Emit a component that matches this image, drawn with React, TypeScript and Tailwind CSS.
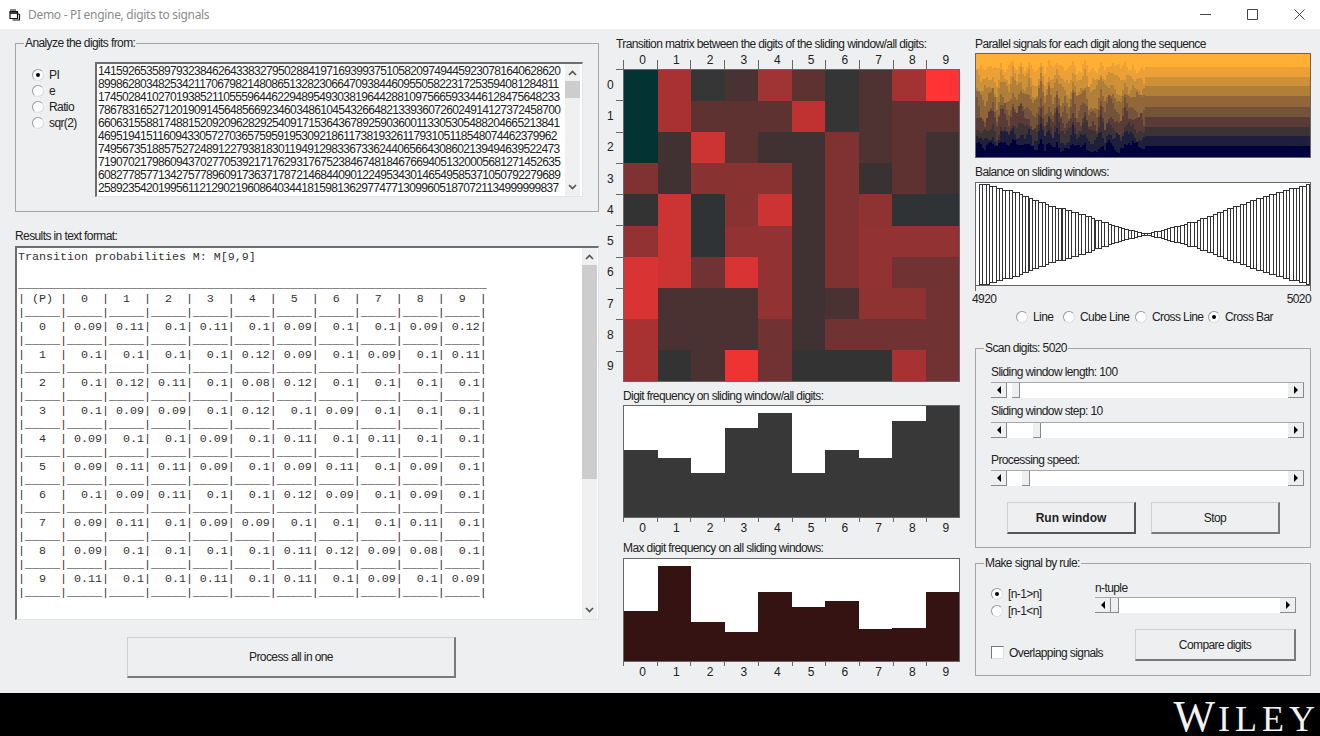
import React from 'react';

const UI = "font-['Liberation_Sans',Arial,sans-serif] text-[12px] leading-[12px] tracking-[-0.6px] text-[#222]";

const piLines = [
    '14159265358979323846264338327950288419716939937510582097494459230781640628620',
    '89986280348253421170679821480865132823066470938446095505822317253594081284811',
    '17450284102701938521105559644622948954930381964428810975665933446128475648233',
    '78678316527120190914564856692346034861045432664821339360726024914127372458700',
    '66063155881748815209209628292540917153643678925903600113305305488204665213841',
    '46951941511609433057270365759591953092186117381932611793105118548074462379962',
    '74956735188575272489122793818301194912983367336244065664308602139494639522473',
    '71907021798609437027705392171762931767523846748184676694051320005681271452635',
    '60827785771342757789609173637178721468440901224953430146549585371050792279689',
    '25892354201995611212902196086403441815981362977477130996051870721134999999837',
];

const probs = [
    ['0.09', '0.11', '0.1', '0.11', '0.1', '0.09', '0.1', '0.1', '0.09', '0.12'],
    ['0.1', '0.1', '0.1', '0.1', '0.12', '0.09', '0.1', '0.09', '0.1', '0.11'],
    ['0.1', '0.12', '0.11', '0.1', '0.08', '0.12', '0.1', '0.1', '0.1', '0.1'],
    ['0.1', '0.09', '0.09', '0.1', '0.12', '0.1', '0.09', '0.1', '0.1', '0.1'],
    ['0.09', '0.1', '0.1', '0.09', '0.1', '0.11', '0.1', '0.11', '0.1', '0.1'],
    ['0.09', '0.11', '0.11', '0.09', '0.1', '0.09', '0.11', '0.1', '0.09', '0.1'],
    ['0.1', '0.09', '0.11', '0.1', '0.1', '0.12', '0.09', '0.1', '0.09', '0.1'],
    ['0.09', '0.11', '0.1', '0.09', '0.09', '0.1', '0.1', '0.1', '0.11', '0.1'],
    ['0.09', '0.1', '0.1', '0.1', '0.1', '0.11', '0.12', '0.09', '0.08', '0.1'],
    ['0.11', '0.1', '0.1', '0.11', '0.1', '0.11', '0.1', '0.09', '0.1', '0.09'],
];

const underRow = '|' + '_____|'.repeat(11);
const resultText = [
    'Transition probabilities M: M[9,9]',
    '',
    '_'.repeat(67),
    '| (P) |' + Array.from({ length: 10 }, (_, i) => `  ${i}  |`).join(''),
    underRow,
    ...probs.flatMap((row, i) => [
        `|  ${i}  |` + row.map((v) => v.padStart(5, ' ') + '|').join(''),
        underRow,
    ]),
].join('\n');

const matrix = [
    ['#033333', '#a83232', '#363636', '#4a3232', '#a03333', '#5f3232', '#353535', '#4f3232', '#a33232', '#ff3333'],
    ['#033333', '#a83232', '#5f3232', '#5f3232', '#5f3232', '#c03232', '#353535', '#4f3232', '#5f3232', '#5f3232'],
    ['#033333', '#403232', '#cc3333', '#5f3232', '#403232', '#403232', '#803232', '#4f3232', '#5f3232', '#403232'],
    ['#803232', '#403232', '#883232', '#883232', '#883232', '#403232', '#803232', '#3a3232', '#5f3232', '#403232'],
    ['#333333', '#cc3333', '#303336', '#883232', '#cc3333', '#403232', '#803232', '#8f3232', '#303336', '#303336'],
    ['#933232', '#cc3333', '#303336', '#933232', '#933232', '#403232', '#803232', '#933232', '#933232', '#933232'],
    ['#d93333', '#cc3333', '#703232', '#d93333', '#933232', '#403232', '#803232', '#933232', '#703232', '#703232'],
    ['#d93333', '#4a3232', '#4a3232', '#4a3232', '#933232', '#403232', '#4a3232', '#8f3232', '#8f3232', '#703232'],
    ['#a83232', '#4a3232', '#4a3232', '#4a3232', '#703232', '#403232', '#703232', '#703232', '#703232', '#703232'],
    ['#a83232', '#333333', '#4a3232', '#ef3333', '#703232', '#333333', '#333333', '#333333', '#a83232', '#703232'],
];

const freqHeights = [67, 59, 44, 89, 104, 44, 67, 59, 96, 111];
const maxHeights = [50, 95, 39, 29, 69, 54, 60, 32, 33, 69];

const bandColors = ['#ffaf33', '#eda035', '#cf9138', '#b07f39', '#91673a', '#735339', '#5a3b38', '#3c3337', '#1e1f3c', '#00003c'];
const bandTops = [0, 13, 23, 33, 43, 54, 64, 74, 84, 94];

function makeNoise(seed: number) {
    let s = seed;
    return () => {
        s = (s * 1664525 + 1013904223) % 4294967296;
        return s / 4294967296;
    };
}

function bandPaths() {
    const rand = makeNoise(31415);
    const sharedKnots = Array.from({ length: 60 }, () => rand() * 2 - 1);
    return bandTops.map((top, k) => {
        if (k === 0) return 'M0 0H335V105H0Z';
        const ownKnots = Array.from({ length: 60 }, () => rand() * 2 - 1);
        const amp = 5 + 9 * Math.sin((k / 10) * Math.PI);
        let d = `M0 ${top}`;
        for (let x = 0; x < 170; x += 2) {
            const t = x / 4;
            const i = Math.floor(t);
            const f = t - i;
            const shared = sharedKnots[i] * (1 - f) + sharedKnots[i + 1] * f;
            const own = ownKnots[i] * (1 - f) + ownKnots[i + 1] * f;
            const y = Math.round(top + (shared * 0.7 + own * 0.55) * amp + (rand() - 0.5) * 4 - 1);
            d += `L${x} ${y}L${x + 2} ${y}`;
        }
        return d + `L170 ${top}H335V105H0Z`;
    });
}

const balanceKnots: [number, number][] = [
    [4, 51], [40, 41.6], [73, 29], [106, 20], [140, 7.5], [170, 0.5], [190, 5], [223, 14], [256, 26.7], [290, 38], [336, 51],
];

function balanceHalf(x: number) {
    for (let i = 0; i < balanceKnots.length - 1; i++) {
        const [a, ha] = balanceKnots[i];
        const [b, hb] = balanceKnots[i + 1];
        if (x <= b) return ha + ((x - a) / (b - a)) * (hb - ha);
    }
    return 51;
}

function Group({ title, className, children }: { title: string; className: string; children: React.ReactNode }) {
    return (
        <div className={`relative border border-[#a4a6a7] ${className}`}>
            <span className={`absolute -top-[7px] left-[8px] bg-[#eeeff0] px-[1px] ${UI}`}>{title}</span>
            {children}
        </div>
    );
}

function Radio({ label, checked, className = '' }: { label: string; checked?: boolean; className?: string }) {
    return (
        <div className={`flex items-center whitespace-nowrap ${UI} ${className}`}>
            <span className="flex h-[12px] w-[12px] shrink-0 items-center justify-center rounded-full border border-t-[#9a9a9a] border-l-[#9a9a9a] border-r-[#dddddd] border-b-[#dddddd] bg-white">
                {checked && <span className="h-[4px] w-[4px] rounded-full bg-black" />}
            </span>
            <span className="ml-[5px]">{label}</span>
        </div>
    );
}

function ArrowButton({ dir }: { dir: 'left' | 'right' }) {
    return (
        <span className="flex h-full w-[16px] shrink-0 items-center justify-center border-r border-b border-r-[#8a8a8a] border-b-[#8a8a8a] bg-[#eeeff0]">
            <svg width="6" height="8" viewBox="0 0 6 8">
                <polygon points={dir === 'left' ? '5,0 5,8 1,4' : '1,0 1,8 5,4'} fill="#000" />
            </svg>
        </span>
    );
}

function HScroll({ thumb, className = '' }: { thumb: string; className?: string }) {
    return (
        <div className={`flex h-[16px] border-t border-[#a8a8a8] bg-white ${className}`}>
            <ArrowButton dir="left" />
            <span className={`h-full w-[8px] shrink-0 border-r border-b border-r-[#8a8a8a] border-b-[#8a8a8a] bg-[#eeeff0] ${thumb}`} />
            <span className="flex-1" />
            <ArrowButton dir="right" />
        </div>
    );
}

function VScroll({ thumb, className = '' }: { thumb: string; className?: string }) {
    return (
        <div className={`flex w-[15px] shrink-0 flex-col bg-[#f0f0f0] ${className}`}>
            <svg className="shrink-0" width="15" height="17" viewBox="0 0 15 17">
                <polyline points="4,11 7.5,7.5 11,11" fill="none" stroke="#555" strokeWidth="1.7" />
            </svg>
            <div className="min-h-0 flex-1">
                <div className={`bg-[#cdcdcd] ${thumb}`} />
            </div>
            <svg className="shrink-0" width="15" height="17" viewBox="0 0 15 17">
                <polyline points="4,6 7.5,9.5 11,6" fill="none" stroke="#555" strokeWidth="1.7" />
            </svg>
        </div>
    );
}

function WinButton({ label, strong, className }: { label: string; strong?: boolean; className: string }) {
    return (
        <button
            className={`flex items-center justify-center border border-t-[#cfcfcf] border-l-[#cfcfcf] border-b-2 border-r-2 bg-[#eeeff0] ${UI} ${
                strong ? 'border-t-[#777] border-l-[#777] border-b-[#555] border-r-[#555]' : 'border-b-[#7a7a7a] border-r-[#7a7a7a]'
            } ${className}`}
        >
            {strong ? <b className="tracking-[0px]">{label}</b> : label}
        </button>
    );
}

function DigitAxis({ top, className = '' }: { top?: boolean; className?: string }) {
    return (
        <div className={`grid w-[337px] grid-cols-10 ${top ? 'h-[19px]' : 'h-[20px]'} ${className}`}>
            {Array.from({ length: 10 }, (_, i) => (
                <div key={i} className={`relative flex items-center justify-center pl-[5px] ${UI}`}>
                    {i}
                    <span className={`absolute left-0 w-px bg-[#666] ${top ? 'bottom-0 h-[9px]' : 'top-0 h-[4px]'}`} />
                </div>
            ))}
        </div>
    );
}

function BarChart({ heights, fill, frame }: { heights: number[]; fill: string; frame: string }) {
    const h = frame === 'freq' ? 111 : 102;
    return (
        <div className={`w-[337px] border border-[#666] bg-white ${frame === 'freq' ? 'h-[113px]' : 'h-[104px]'}`}>
            <svg className="block" width="335" height={h} viewBox={`0 0 335 ${h}`} shapeRendering="crispEdges">
                {heights.map((v, i) => (
                    <rect key={i} x={i * 33.5} y={h - v} width="33.8" height={v} fill={fill} />
                ))}
            </svg>
        </div>
    );
}

export default function App() {
    const bars = Array.from({ length: 100 }, (_, i) => 3 + i * 3.3);

    return (
        <div className="flex h-[736px] w-[1320px] flex-col overflow-hidden bg-[#eeeff0]">
            {/* Title bar */}
            <header className="flex h-[29px] shrink-0 items-center bg-white">
                <svg className="ml-[8px]" width="14" height="14" viewBox="0 0 14 14" fill="none" stroke="#111" strokeWidth="1.2">
                    <path d="M2 3.5h7.5v7H2z" />
                    <path d="M2 2h6M9.5 5.5l2 1v5.5h-7" />
                    <path d="M2 5h7.5" strokeWidth="1.6" />
                </svg>
                <span className="ml-[6px] font-['Noto_Sans',sans-serif] text-[12px] tracking-[-0.3px] text-[#8c8c8c]">
                    Demo - PI engine, digits to signals
                </span>
                <div className="ml-auto mr-[15px] flex items-center gap-[36px]">
                    <svg width="11" height="11" viewBox="0 0 11 11" stroke="#444" fill="none">
                        <path d="M0 5.5h11" />
                    </svg>
                    <svg width="11" height="11" viewBox="0 0 11 11" stroke="#444" fill="none">
                        <path d="M.5.5h10v10H.5z" />
                    </svg>
                    <svg width="11" height="11" viewBox="0 0 11 11" stroke="#444" fill="none">
                        <path d="M.5.5l10 10M10.5.5l-10 10" />
                    </svg>
                </div>
            </header>

            <main className="flex flex-1">
                {/* Left column */}
                <section className="ml-[15px] w-[584px] pt-[14px]">
                    <Group title="Analyze the digits from:" className="h-[169px] w-[584px]">
                        <div className="flex">
                            <div className="ml-[16px] w-[63px] flex-col pt-[25px]">
                                <Radio label="PI" checked className="h-[12px]" />
                                <Radio label="e" className="mt-[4px] h-[12px]" />
                                <Radio label="Ratio" className="mt-[4px] h-[12px]" />
                                <Radio label="sqr(2)" className="mt-[4px] h-[12px]" />
                            </div>
                            <div className="mt-[18px] flex h-[135px] w-[488px] border border-t-2 border-l-2 border-t-[#6e6e6e] border-l-[#6e6e6e] border-r-[#e4e4e4] border-b-[#e4e4e4] bg-white">
                                <div className="flex-1 overflow-hidden pl-[1px] pt-[1px] font-['Liberation_Sans',Arial,sans-serif] text-[12px] leading-[13px] tracking-[-0.67px] text-[#222]">
                                    {piLines.map((line) => (
                                        <div key={line}>{line}</div>
                                    ))}
                                </div>
                                <VScroll thumb="h-[17px]" className="mr-[2px]" />
                            </div>
                        </div>
                    </Group>

                    <div className={`mt-[18px] ${UI}`}>Results in text format:</div>
                    <div className="mt-[4px] flex h-[374px] w-[584px] border border-t-2 border-l-2 border-t-[#6e6e6e] border-l-[#6e6e6e] border-r-[#e4e4e4] border-b-[#e4e4e4] bg-white">
                        <pre className="flex-1 overflow-hidden pl-[1px] pt-[2px] font-['Liberation_Mono',monospace] text-[11.67px] leading-[14px] text-[#333]">
                            {resultText}
                        </pre>
                        <VScroll thumb="h-[214px]" className="mr-[1px]" />
                    </div>

                    <WinButton label="Process all in one" className="ml-[112px] mt-[17px] h-[41px] w-[329px]" />
                </section>

                {/* Middle column */}
                <section className="ml-[11px] w-[350px] pt-[9px]">
                    <div className={`ml-[6px] h-[12px] ${UI}`}>Transition matrix between the digits of the sliding window/all digits:</div>
                    <DigitAxis top className="ml-[13px]" />
                    <div className="flex">
                        <div className="grid h-[313px] w-[13px] grid-rows-10">
                            {matrix.map((_, i) => (
                                <div key={i} className={`relative flex items-center ${UI}`}>
                                    <span className="-ml-[3px]">{i}</span>
                                    <span className="absolute right-0 top-0 h-px w-[7px] bg-[#666]" />
                                </div>
                            ))}
                        </div>
                        <div className="h-[313px] w-[337px] border border-[#666]">
                            <svg className="block" width="335" height="311" viewBox="0 0 335 311" shapeRendering="crispEdges">
                                {matrix.flatMap((row, r) =>
                                    row.map((fill, c) => (
                                        <rect key={`${r}-${c}`} x={c * 33.5} y={r * 31.1} width="33.8" height="31.4" fill={fill} />
                                    )),
                                )}
                            </svg>
                        </div>
                    </div>

                    <div className={`ml-[13px] mt-[8px] h-[12px] ${UI}`}>Digit frequency on sliding window/all digits:</div>
                    <div className="ml-[13px] mt-[3px]">
                        <BarChart heights={freqHeights} fill="#383838" frame="freq" />
                        <DigitAxis />
                    </div>
                    <div className={`ml-[13px] mt-[4px] h-[12px] ${UI}`}>Max digit frequency on all sliding windows:</div>
                    <div className="ml-[13px] mt-[4px]">
                        <BarChart heights={maxHeights} fill="#361313" frame="max" />
                        <DigitAxis />
                    </div>
                </section>

                {/* Right column */}
                <section className="ml-[15px] w-[336px] pt-[9px]">
                    <div className={`h-[12px] ${UI}`}>Parallel signals for each digit along the sequence</div>
                    <div className="mt-[3px] h-[105px] w-[336px] border border-[#666]">
                        <svg className="block" width="334" height="103" viewBox="0 0 335 105" preserveAspectRatio="none" shapeRendering="crispEdges">
                            {bandPaths().map((d, k) => (
                                <path key={k} d={d} fill={bandColors[k]} />
                            ))}
                        </svg>
                    </div>

                    <div className={`mt-[8px] h-[12px] ${UI}`}>Balance on sliding windows:</div>
                    <div className="mt-[4px] h-[104px] w-[336px] border border-[#666] bg-white">
                        <svg className="block" width="334" height="102" viewBox="0 0 334 102" shapeRendering="crispEdges">
                            {bars.map((x) => {
                                const raw = balanceHalf(x + 1.6);
                                const half = raw < 10 ? Math.round(raw) : Math.round(raw / 2) * 2;
                                return (
                                    <rect
                                        key={x}
                                        x={Math.round(x) + 0.5}
                                        y={51 - half + 0.5}
                                        width={Math.round(x + 3.3) - Math.round(x)}
                                        height={Math.max(half * 2, 1)}
                                        fill="#fff"
                                        stroke="#333"
                                    />
                                );
                            })}
                        </svg>
                    </div>
                    <div className="relative flex h-[19px] items-end justify-between">
                        <span className="absolute left-0 top-0 h-[5px] w-px bg-[#666]" />
                        <span className="absolute right-0 top-0 h-[5px] w-px bg-[#666]" />
                        <span className={`-ml-[3px] ${UI}`}>4920</span>
                        <span className={UI}>5020</span>
                    </div>
                    <div className="ml-[41px] mt-[5px] flex h-[14px] items-center">
                        <Radio label="Line" className="w-[47px]" />
                        <Radio label="Cube Line" className="w-[72px]" />
                        <Radio label="Cross Line" className="w-[73px]" />
                        <Radio label="Cross Bar" checked />
                    </div>

                    <Group title="Scan digits: 5020" className="mt-[24px] h-[200px] w-[336px]">
                        <div className="px-[15px] pt-[17px]">
                            <div className={UI}>Sliding window length: 100</div>
                            <HScroll thumb="ml-[5px]" className="mt-[4px] w-[313px]" />
                            <div className={`mt-[7px] ${UI}`}>Sliding window step: 10</div>
                            <HScroll thumb="ml-[26px]" className="mt-[5px] w-[313px]" />
                            <div className={`mt-[16px] ${UI}`}>Processing speed:</div>
                            <HScroll thumb="ml-[15px]" className="mt-[4px] w-[313px]" />
                            <div className="ml-[16px] mt-[16px] flex gap-[15px]">
                                <WinButton label="Run window" strong className="h-[32px] w-[129px]" />
                                <WinButton label="Stop" className="h-[32px] w-[129px]" />
                            </div>
                        </div>
                    </Group>

                    <Group title="Make signal by rule:" className="mt-[15px] h-[113px] w-[336px]">
                        <div className="flex">
                            <div className="ml-[15px] w-[104px] pt-[24px]">
                                <Radio label="[n-1>n]" checked className="h-[12px]" />
                                <Radio label="[n-1<n]" className="mt-[5px] h-[12px]" />
                                <label className={`mt-[29px] flex items-center whitespace-nowrap ${UI}`}>
                                    <span className="h-[13px] w-[13px] shrink-0 border border-t-[#777] border-l-[#777] border-r-[#ddd] border-b-[#ddd] bg-white" />
                                    <span className="ml-[5px]">Overlapping signals</span>
                                </label>
                            </div>
                            <div className="w-[201px] pt-[18px]">
                                <div className={UI}>n-tuple</div>
                                <HScroll thumb="" className="mt-[3px] w-[201px]" />
                                <WinButton label="Compare digits" className="ml-[40px] mt-[16px] h-[32px] w-[161px]" />
                            </div>
                        </div>
                    </Group>
                </section>
            </main>

            {/* Footer */}
            <footer className="flex h-[43px] shrink-0 items-center justify-end bg-black pt-[4px] font-['Liberation_Serif',serif] text-[#f2f2f2]">
                <span className="text-[44px] leading-[38px] tracking-[3px]">W</span>
                <span className="pt-[4px] text-[36px] leading-[34px] tracking-[5px]">ILEY</span>
            </footer>
        </div>
    );
}
